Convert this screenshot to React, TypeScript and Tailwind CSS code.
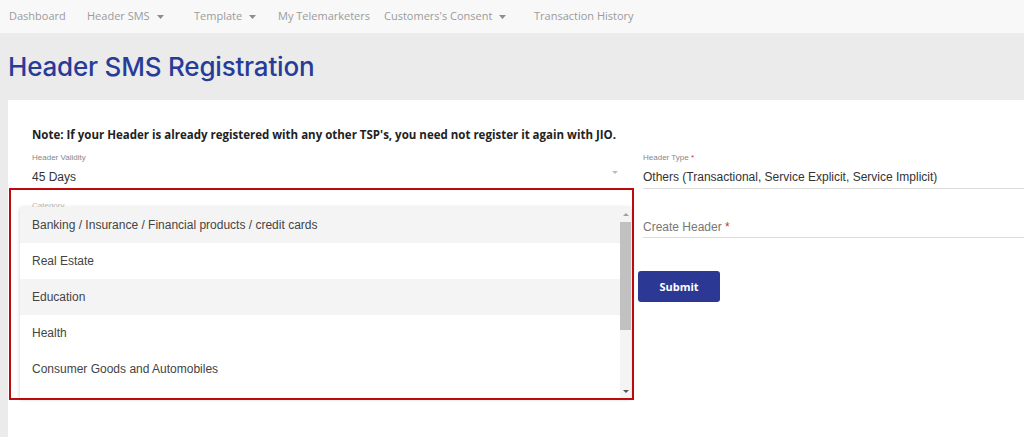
import React from "react";

const NAV = [
  { label: "Dashboard", caret: false, w: "w-[78px]" },
  { label: "Header SMS", caret: true, w: "w-[107px]" },
  { label: "Template", caret: true, w: "w-[84px]" },
  { label: "My Telemarketers", caret: false, w: "w-[106px]" },
  { label: "Customers's Consent", caret: true, w: "w-[150px]" },
  { label: "Transaction History", caret: false, w: "" },
];

const CATEGORIES = [
  "Banking / Insurance / Financial products / credit cards",
  "Real Estate",
  "Education",
  "Health",
  "Consumer Goods and Automobiles",
];

const Caret = () => (
  <svg width="7" height="4" viewBox="0 0 7 4" className="ml-[7px]">
    <path d="M0 0h7L3.5 4z" fill="#8d8d8d" />
  </svg>
);

export default function App() {
  return (
    <div className="h-[437px] w-[1024px] overflow-hidden bg-[#ebebeb] font-['Liberation_Sans',Arial,sans-serif]">
      {/* top nav */}
      <div className="flex h-[33px] items-center bg-[#f8f8f9] pl-[9px] font-['Open_Sans',sans-serif] text-[11px] text-[#9b9b9b]">
        {NAV.map((n) => (
          <div key={n.label} className={`flex shrink-0 items-center ${n.w}`}>
            <span>{n.label}</span>
            {n.caret && <Caret />}
          </div>
        ))}
      </div>

      {/* page title */}
      <div className="flex h-[67px] items-center pl-[8px]">
        <h1 className="font-['Inter',sans-serif] text-[26px] font-medium tracking-[-0.2px] text-[#273c98]">
          Header SMS Registration
        </h1>
      </div>

      {/* card */}
      <div className="relative ml-[8px] h-[337px] bg-white pl-[24px] pt-[26px]">
        <p className="font-['Open_Sans',sans-serif] text-[11.5px] font-bold text-[#222]">
          Note: If your Header is already registered with any other TSP's, you need not register it again with JIO.
        </p>

        <div className="mt-[7px] flex">
          {/* left column */}
          <div className="w-[590px]">
            <div className="relative h-[39px] border-b border-[#dcdcdc] pt-[2px]">
              <div className="text-[8px] text-[#888]">Header Validity</div>
              <div className="mt-[4px] text-[12px] text-[#333]">45 Days</div>
              <svg width="6" height="3" viewBox="0 0 6 3" className="absolute right-[4px] top-[21px]">
                <path d="M0 0h6L3 3z" fill="#bbb" />
              </svg>
            </div>
            <div className="mt-[11px] text-[8px] text-[#bbb]">Category</div>
          </div>

          {/* right column */}
          <div className="ml-[21px] flex-1">
            <div className="h-[39px] border-b border-[#dcdcdc] pt-[2px]">
              <div className="text-[8px] text-[#888]">
                Header Type <span className="text-[#c33]">*</span>
              </div>
              <div className="mt-[4px] text-[12px] text-[#333]">
                Others (Transactional, Service Explicit, Service Implicit)
              </div>
            </div>
            <div className="mt-[29px] h-[20px] border-b border-[#dcdcdc] text-[12px] text-[#777]">
              Create Header <span className="text-[#c33]">*</span>
            </div>
            <button className="-ml-[5px] mt-[33px] h-[31px] w-[82px] rounded-[3px] bg-[#2b3994] font-['Open_Sans',sans-serif] text-[11px] font-bold text-white">
              Submit
            </button>
          </div>
        </div>

        {/* open category menu */}
        <div className="absolute left-[12px] top-[107px] flex h-[191px] w-[611px] bg-white shadow-[0_1px_4px_rgba(0,0,0,0.2)]">
          <div className="flex-1">
            {CATEGORIES.map((c, i) => (
              <div
                key={c}
                className={`flex h-[36px] items-center pl-[12px] text-[12px] text-[#444] ${
                  i % 2 === 0 && i < 4 ? "bg-[#f4f4f4]" : "bg-white"
                }`}
              >
                {c}
              </div>
            ))}
          </div>
          <div className="flex w-[11px] flex-col items-center bg-[#f4f4f4]">
            <svg width="6" height="3" viewBox="0 0 6 3" className="mt-[6px]">
              <path d="M0 3h6L3 0z" fill="#a0a0a0" />
            </svg>
            <div className="mt-[6px] h-[108px] w-[11px] bg-[#c1c1c1]" />
            <div className="flex-1" />
            <svg width="6" height="3" viewBox="0 0 6 3" className="mb-[5px]">
              <path d="M0 0h6L3 3z" fill="#555" />
            </svg>
          </div>
        </div>

        {/* highlight frame */}
        <div className="absolute left-[1px] top-[88px] h-[212px] w-[625px] border-2 border-[#c0080f]" />
      </div>
    </div>
  );
}
